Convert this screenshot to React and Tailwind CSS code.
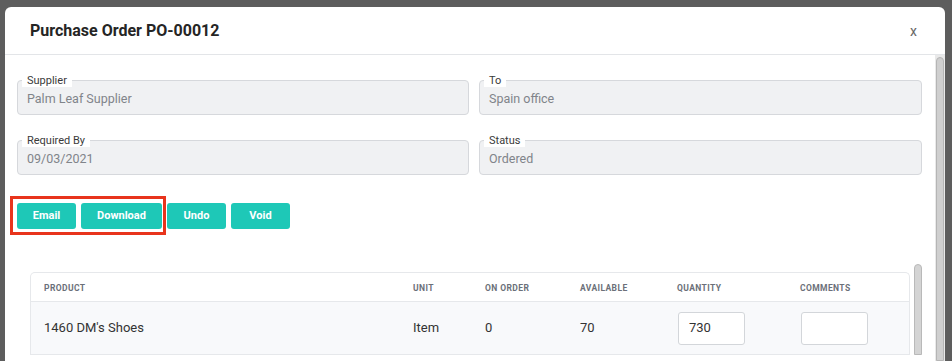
import React from 'react';

const fields = [
  { label: 'Supplier', value: 'Palm Leaf Supplier' },
  { label: 'To', value: 'Spain office' },
  { label: 'Required By', value: '09/03/2021' },
  { label: 'Status', value: 'Ordered' },
];

const columns = ['Product', 'Unit', 'On Order', 'Available', 'Quantity', 'Comments'];

const ReadonlyField = ({ label, value }) => (
  <div className="relative h-[35px] rounded-[4px] border border-[#d6d8dc] bg-[#f0f1f3] pl-[9px] flex items-center">
    <span className="absolute left-[4px] top-[-7px] bg-white px-[5px] text-[11px] leading-[13px] text-[#3a3a3a]">
      {label}
    </span>
    <span className="pt-[3px] text-[12.5px] text-[#80848a]">{value}</span>
  </div>
);

const ActionButton = ({ children, width }) => (
  <button className={`${width} h-[26px] rounded-[3px] bg-[#1ec8b7] text-[11px] font-bold text-white`}>
    {children}
  </button>
);

const App = () => {
  return (
    <div
      className="h-[361px] w-[952px] overflow-hidden bg-[#5d5d5d] pl-[5px] pr-[7px] pt-[7px]"
      style={{ fontFamily: 'Roboto, "Noto Sans", sans-serif' }}
    >
      <div className="flex h-full flex-col rounded-t-[6px] bg-white">
        {/* header */}
        <div className="flex h-[48px] shrink-0 items-center justify-between border-b border-[#e3e5e8] pl-[25px] pr-[28px]">
          <h2 className="pt-[1px] text-[16px] font-bold text-[#252525]">Purchase Order PO-00012</h2>
          <span className="pt-[2px] text-[14px] text-[#666]">x</span>
        </div>

        {/* body */}
        <div className="flex min-h-0 flex-1">
          <div className="flex-1 pl-[12px] pr-[13px] pt-[25px]">
            <div className="grid grid-cols-[452px_443px] gap-x-[10px] gap-y-[25px]">
              {fields.map((f) => (
                <ReadonlyField key={f.label} label={f.label} value={f.value} />
              ))}
            </div>

            <div className="relative mt-[28px] flex gap-[5px]">
              <ActionButton width="w-[59px]">Email</ActionButton>
              <ActionButton width="w-[81px]">Download</ActionButton>
              <ActionButton width="w-[59px]">Undo</ActionButton>
              <ActionButton width="w-[59px]">Void</ActionButton>
              <div className="pointer-events-none absolute left-[-7px] top-[-7px] h-[39px] w-[156px] border-[3px] border-[#e8341c]" />
            </div>

            <div className="mt-[43px] flex pl-[13px]">
              <div className="w-[880px] rounded-t-[5px] border border-[#e6e8eb] border-b-0">
                <div className="grid h-[29px] grid-cols-[369px_72px_95px_97px_123px_1fr] items-center border-b border-[#e6e8eb]">
                  {columns.map((c) => (
                    <div key={c} className="pl-[13px] pt-[2px] text-[8.5px] font-bold uppercase tracking-[0.4px] text-[#6b7079]">
                      {c}
                    </div>
                  ))}
                </div>
                <div className="grid h-[53px] grid-cols-[369px_72px_95px_97px_123px_1fr] items-center border-b border-[#e6e8eb] bg-[#f8f9fb] text-[13px] text-[#333]">
                  <div className="pl-[13px]">1460 DM's Shoes</div>
                  <div className="pl-[13px]">Item</div>
                  <div className="pl-[13px]">0</div>
                  <div className="pl-[13px]">70</div>
                  <div className="pl-[14px]">
                    <div className="flex h-[33px] w-[67px] items-center rounded-[3px] border border-[#d3d6da] bg-white pl-[10px]">
                      730
                    </div>
                  </div>
                  <div className="pl-[14px]">
                    <div className="h-[33px] w-[67px] rounded-[3px] border border-[#d3d6da] bg-white" />
                  </div>
                </div>
              </div>
              {/* table scrollbar */}
              <div className="ml-[4px] mt-[-8px] w-[8px] rounded-t-full border border-[#b9b9b9] bg-[#d4d4d4]" />
            </div>
          </div>

          {/* body scrollbar */}
          <div className="w-[10px] bg-[#e9e9e9] pl-[1px] pt-[2px]">
            <div className="h-full w-[8px] rounded-t-full border border-[#b5b5b5] bg-[#cfcfcf]" />
          </div>
        </div>
      </div>
    </div>
  );
};

export default App;
